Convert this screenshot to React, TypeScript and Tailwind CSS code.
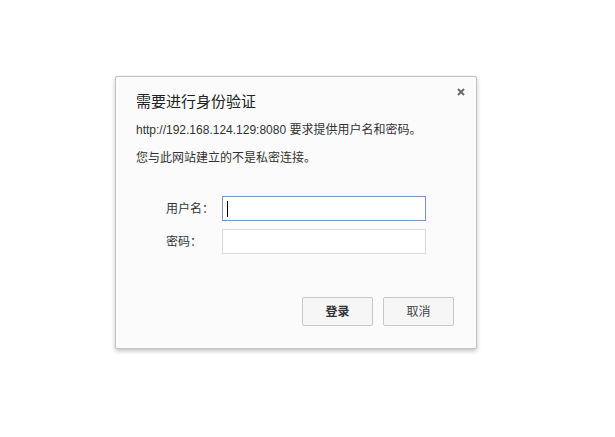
export default function App() {
  return (
    <div
      className="w-[615px] h-[437px] bg-white pt-[76px] pl-[115px] text-[#333]"
      style={{ fontFamily: '"Liberation Sans", "Noto Sans CJK SC", sans-serif' }}
    >
      <div className="relative w-[362px] h-[273px] bg-[#fbfbfb] border border-[#c4c4c4] rounded-[2px] shadow-[0_2px_4px_rgba(0,0,0,0.25)] pl-[20px] pt-[15px]">
        <button className="absolute right-[10px] top-[10px] w-[10px] h-[10px] flex items-center justify-center">
          <svg width="8" height="8" viewBox="0 0 8 8">
            <path d="M1 1L7 7M7 1L1 7" stroke="#6b6b6b" strokeWidth="2" />
          </svg>
        </button>

        <h1 className="text-[15px] leading-[20px] text-[#222]">需要进行身份验证</h1>

        <p className="mt-[10px] text-[12px] leading-[16px]">
          http://192.168.124.129:8080 要求提供用户名和密码。
        </p>
        <p className="mt-[12px] text-[12px] leading-[16px]">
          您与此网站建立的不是私密连接。
        </p>

        <div className="mt-[30px] pl-[30px] flex flex-col gap-[8px]">
          <div className="flex items-center">
            <span className="w-[56px] text-[12px]">用户名：</span>
            <div className="w-[204px] h-[25px] bg-white border border-[#7a95c8] flex items-center pl-[4px]">
              <span className="w-[1px] h-[16px] bg-black" />
            </div>
          </div>
          <div className="flex items-center">
            <span className="w-[56px] text-[12px]">密码：</span>
            <div className="w-[204px] h-[25px] bg-white border border-[#dcdcdc]" />
          </div>
        </div>

        <div className="mt-[43px] pr-[22px] flex justify-end gap-[10px]">
          <button className="w-[71px] h-[29px] bg-[#f6f6f6] border border-[#c8c8c8] rounded-[2px] text-[12px] font-bold text-[#333]">
            登录
          </button>
          <button className="w-[71px] h-[29px] bg-[#f6f6f6] border border-[#c8c8c8] rounded-[2px] text-[12px] text-[#444]">
            取消
          </button>
        </div>
      </div>
    </div>
  );
}
